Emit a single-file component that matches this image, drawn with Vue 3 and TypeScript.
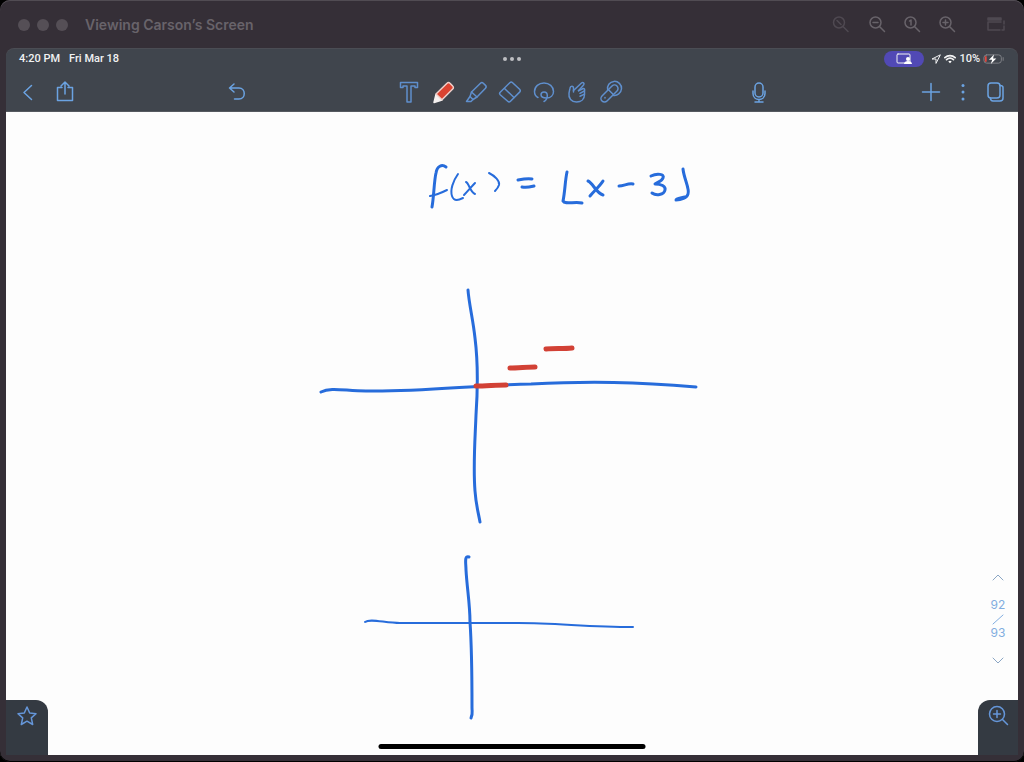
<script setup lang="ts">
import { ref } from 'vue'

type Tool = { id: string; label: string; paths: string[] }

const tools: Tool[] = [
  { id: 'text', label: 'Text', paths: ['M3.5 2.5h17v5h-2.500v-1.500H14v16h-4V6H6v1.500H3.500z'] },
  { id: 'pencil', label: 'Pencil', paths: [] },
  {
    id: 'highlighter',
    label: 'Highlighter',
    paths: ['M7.500 12L16.500 3.200a2 2 0 0 1 2.800 0l2.200 2.200a2 2 0 0 1 0 2.800L13 17z', 'M7.500 12l-1.500 4.500L9 19.500l4-2.500', 'M6 16.500L2.500 21.500H7l2-2'],
  },
  {
    id: 'eraser',
    label: 'Eraser',
    paths: ['M2.200 12.300L11.800 2.700a2 2 0 0 1 2.800 0l7 6.600a2 2 0 0 1 0 2.800L12.500 21.300a2 2 0 0 1-2.800 0l-7.500-6.600a1.700 1.700 0 0 1 0-2.400z', 'M6.500 8.500l9.500 9'],
  },
  {
    id: 'lasso',
    label: 'Lasso',
    paths: ['M6 17.500C3.500 16.200 2.500 14 2.500 11.500c0-5 4.300-8.500 9.500-8.500s9.500 3.500 9.500 8.500c0 4-3 6.500-7 6.500-3 0-5.500-1-5.500-3.200 0-1.800 1.300-2.800 3-2.800 2 0 3.300 1.200 3.300 3.500 0 3-1.300 5-3.300 6'],
  },
  {
    id: 'hand',
    label: 'Gesture',
    paths: [
      'M8.500 12V8.200c0-2.700-3.200-2.700-3.500 0l-1 5c-.8 5 2.500 8.800 7.500 8.800 4.700 0 8-2.800 8-7.500V11',
      'M8.500 10.500L16.500 3c1.500-1.300 3.300.400 2.100 2L13.500 10.800',
      'M13.500 10.800l4.200-2c1.800-.8 2.800 1.400 1.200 2.300L15 13.300M15 16.200l4-1.800',
    ],
  },
  {
    id: 'pointer',
    label: 'Laser pointer',
    paths: ['M13 6L3 16a3.500 3.500 0 0 0 5 5L18 11a3.500 3.500 0 0 0-5-5z', 'M8.700 10A7 7 0 1 1 14 15.200', 'M9.500 9.700l4.800 4.800M6 17.500v.500'],
  },
]

const activeTool = ref('pencil')
const page = ref(92)
const pageCount = 93

const inkStrokes = [
  // f(x) = ⌊x − 3⌋
  { width: 3, d: 'M446 167c-4-3-9-1-10 6-2 8-2 23-4 34' },
  { width: 2, d: 'M430 196c7-1 11-3 17-6' },
  { width: 2, d: 'M458 174c-5 7-8 16-6 22 2 6 7 4 11 2' },
  { width: 2, d: 'M466 182c3 1 4 10 9 12M475 183c-3 3-7 8-11 12' },
  { width: 2, d: 'M489 173c6 3 11 8 10 12-1 3-2 4-4 6' },
  { width: 3, d: 'M518 180c5-1 10-2 14-1' },
  { width: 3, d: 'M522 187c5 1 8 0 12-1' },
  { width: 3, d: 'M567 172c-2 9-2 20-4 29 2 4 12 0 19 2' },
  { width: 3, d: 'M588 181c5 2 8 12 15 14M603 181c-3 5-9 10-13 15' },
  { width: 3, d: 'M619 186c5 0 9-3 14-2' },
  { width: 3, d: 'M651 176c6-3 14-2 12 2-1 3-5 4-8 6 6 0 11 2 10 6-1 5-9 6-13 3' },
  { width: 3, d: 'M683 169c1 10 7 20 5 25-1 4-7 6-12 6 0-2 5-2 9-3' },
  // first pair of axes
  { width: 3, d: 'M468 290c1 14 5 29 7 48 3 24 3 48 1 77-1 26-3 51-1 76 1 14 3 20 5 31' },
  { width: 3, d: 'M321 392c10-5 24-1 45-1 55 1 109-6 165-7 60-3 105-2 165 3' },
  // second pair of axes
  { width: 3, d: 'M469 557c-5-2-3 7-3 13 1 18 4 34 4 52 2 29 2 61 2 86 0 4 1 6-1 10' },
  { width: 2, d: 'M365 622c5-4 20 1 35 1h118c39 0 70 4 115 4' },
]

const steps = ['M476 386c10 0 20-1 30-1', 'M510 368c8 0 17-1 25-1', 'M546 349c8-1 17 0 26-1']
</script>

<template>
  <div class="window">
    <header class="titlebar">
      <div class="lights"><i></i><i></i><i></i></div>
      <h1>Viewing Carson’s Screen</h1>
      <div class="zooms">
        <button type="button" class="dim" aria-label="Zoom to fit">
          <svg viewBox="0 0 24 24"><circle cx="9" cy="9.500" r="5.500" /><path d="M13 13.500l5 5M7 7.500l4 4" /></svg>
        </button>
        <button type="button" aria-label="Zoom out">
          <svg viewBox="0 0 24 24"><circle cx="10.500" cy="9.500" r="5.500" /><path d="M14.500 13.500l5 5M8 9.500h5" /></svg>
        </button>
        <button type="button" aria-label="Actual size">
          <svg viewBox="0 0 24 24"><circle cx="10.500" cy="9.500" r="5.500" /><path d="M14.500 13.500l5 5M9.500 8l1.500-1v5" /></svg>
        </button>
        <button type="button" aria-label="Zoom in">
          <svg viewBox="0 0 24 24"><circle cx="10.500" cy="9.500" r="5.500" /><path d="M14.500 13.500l5 5M8 9.500h5M10.500 7v5" /></svg>
        </button>
        <button type="button" class="dim panel" aria-label="Show panel">
          <svg viewBox="0 0 24 24"><path d="M4 7V5h13v2z" fill="currentColor" /><path d="M4 9h13M4 9v8h12M20 8v3M20 13v4h-2" /></svg>
        </button>
      </div>
    </header>

    <main class="tablet">
      <div class="status">
        <div class="clock"><span>4:20 PM</span><span>Fri Mar 18</span></div>
        <div class="dots"><i></i><i></i><i></i></div>
        <div class="system">
          <span class="share-pill">
            <svg viewBox="0 0 16 12"><rect x="1" y="1" width="13" height="9" rx="1" /><circle cx="12" cy="6" r="2" class="solid" /><path d="M8 11c0-4 8-4 8 0z" class="solid" /></svg>
          </span>
          <svg class="locate" viewBox="0 0 10 10"><path d="M9 1L1 5h4v4z" /></svg>
          <svg class="wifi" viewBox="0 0 14 10"><path d="M1 3.500c3.500-3.300 8.500-3.300 12 0M3 5.800c2.500-2.200 5.500-2.200 8 0" /><path d="M5 8c1.500-1.200 2.500-1.200 4 0L7 10z" class="solid" /></svg>
          <span>10%</span>
          <svg class="battery" viewBox="0 0 24 12"><rect x="1" y="1.500" width="19" height="9" rx="3" class="case" /><path d="M22 4.500v3" class="case" /><rect x="2" y="3" width="2" height="6" class="charge" /><path d="M12 1L6.500 6.800h3.500L8.500 11.500l6-6H11z" class="solid" /></svg>
        </div>
      </div>

      <nav class="toolbar" aria-label="Tools">
        <div class="left">
          <button type="button" aria-label="Back"><svg viewBox="0 0 24 24"><path d="M15.500 5.500L8 12.500l7.500 7" /></svg></button>
          <button type="button" aria-label="Share"><svg viewBox="0 0 24 24"><path d="M9 7.500H4.500v13h15v-13H15M12 14V2M8 6l4-4 4 4" /></svg></button>
          <button type="button" class="undo" aria-label="Undo"><svg viewBox="0 0 24 24"><path d="M9 4L4.500 8 9 12M4.500 8H14c7 0 7 11 0 11H9.500" /></svg></button>
        </div>
        <div class="tools">
          <button v-for="t in tools" :key="t.id" type="button" :aria-label="t.label" :aria-pressed="activeTool === t.id" @click="activeTool = t.id">
            <svg v-if="t.id === 'pencil'" viewBox="0 0 24 24">
              <path class="tip" d="M5 14.500L3 22.500l8-2.500z" />
              <path class="barrel" d="M5 14L16 3.200a2 2 0 0 1 3 0L21.700 6a2 2 0 0 1 0 3L11 19.800z" />
            </svg>
            <svg v-else viewBox="0 0 24 24"><path v-for="d in t.paths" :key="d" :d="d" /></svg>
          </button>
        </div>
        <div class="right">
          <button type="button" aria-label="Record"><svg viewBox="0 0 24 24"><rect x="8" y="3" width="8" height="14" rx="4" /><path d="M6 11v2.500c0 8 12 8 12 0V11M12 19.500V22M8 22h8" /></svg></button>
          <button type="button" class="add" aria-label="Add"><svg viewBox="0 0 24 24"><path d="M12 3.500v17M3.500 12h17" /></svg></button>
          <button type="button" aria-label="More"><svg viewBox="0 0 24 24" class="more"><circle cx="12" cy="5.500" r="1.500" /><circle cx="12" cy="12" r="1.500" /><circle cx="12" cy="19" r="1.500" /></svg></button>
          <button type="button" aria-label="Pages"><svg viewBox="0 0 24 24"><rect x="5" y="3" width="12" height="15" rx="3" /><path d="M17 5.500c2 0 3 .500 3 2V18c0 2-1 3-3 3h-7c-1.500 0-2.500-1-2.500-3" /></svg></button>
        </div>
      </nav>

      <section class="paper">
        <svg class="ink" viewBox="6 112 1012 643" role="img" aria-label="f(x) = ⌊x − 3⌋ with two pairs of axes">
          <path v-for="s in inkStrokes" :key="s.d" :d="s.d" :stroke-width="s.width" />
          <path v-for="d in steps" :key="d" :d="d" class="step" />
        </svg>

        <div class="pager">
          <button type="button" aria-label="Previous page" @click="page = Math.max(1, page - 1)"><svg viewBox="0 0 12 8"><path d="M1 7l5-5 5 5" /></svg></button>
          <span>{{ page }}</span>
          <svg class="slash" viewBox="0 0 12 12"><path d="M1 11L11 2" /></svg>
          <span>{{ pageCount }}</span>
          <button type="button" aria-label="Next page" @click="page = Math.min(pageCount, page + 1)"><svg viewBox="0 0 12 8"><path d="M1 1l5 5 5-5" /></svg></button>
        </div>

        <button type="button" class="corner star" aria-label="Favorites"><svg viewBox="0 0 24 24"><path d="M12 3l2.700 6 6.300.700-4.700 4.200L17.700 20.500 12 17.200 6.300 20.500l1.400-6.600L3 9.700 9.300 9z" /></svg></button>
        <button type="button" class="corner lens" aria-label="Zoom canvas"><svg viewBox="0 0 24 24"><circle cx="11" cy="10" r="7.500" /><path d="M16.500 15.500l5 5M7.500 10h7M11 6.500v7" /></svg></button>
        <div class="home-bar"></div>
      </section>
    </main>
  </div>
</template>

<style>
body {
  margin: 0;
  background: #000;
}
</style>

<style scoped>
.window {
  box-sizing: border-box;
  height: 100vh;
  display: flex;
  flex-direction: column;
  padding: 0 6px 7px;
  background: #352f37;
  border-radius: 10px;
  box-shadow: inset 0 1px #514c53, inset 0 -1px #000;
  font-family: Inter, "Liberation Sans", sans-serif;
}
button {
  width: 24px;
  height: 24px;
  padding: 0;
  border: 0;
  background: none;
  color: inherit;
  font: inherit;
  cursor: pointer;
}
svg {
  display: block;
  width: 100%;
  height: 100%;
  fill: none;
  stroke: currentColor;
  stroke-linecap: round;
  stroke-linejoin: round;
}
.solid {
  fill: #fff;
  stroke: none;
}
.titlebar {
  flex: none;
  display: flex;
  align-items: center;
  height: 49px;
  padding: 0 10px 0 12px;
  color: #68636a;
}
.lights {
  display: flex;
  gap: 7px;
}
.lights i {
  width: 12px;
  height: 12px;
  border-radius: 50%;
  background: #554f56;
}
h1 {
  margin: 0 0 0 17px;
  font-size: 14px;
  line-height: 20px;
  font-weight: 600;
}
.zooms {
  display: flex;
  gap: 11px;
  margin-left: auto;
}
.zooms svg {
  stroke-width: 1.5;
}
.dim {
  color: #4f4951;
}
.panel {
  margin-left: 14px;
}
.tablet {
  flex: 1;
  min-height: 0;
  display: flex;
  flex-direction: column;
  overflow: hidden;
  border-radius: 8px 8px 0 0;
  background: #40454d;
  box-shadow: 0 -1px #4b4d54;
}
.status {
  flex: none;
  display: grid;
  grid-template-columns: 1fr auto 1fr;
  align-items: center;
  height: 20px;
  padding: 0 13px;
  color: #f1f2f3;
  font-family: Roboto, Inter, sans-serif;
  font-size: 11px;
  line-height: 16px;
  font-weight: 500;
}
.clock {
  display: flex;
  gap: 9px;
}
.dots {
  display: flex;
  gap: 3px;
}
.dots i {
  width: 4px;
  height: 4px;
  border-radius: 50%;
  background: #bdbfc2;
}
.system {
  display: flex;
  justify-content: flex-end;
  align-items: center;
  gap: 3px;
}
.share-pill {
  display: grid;
  place-items: center;
  width: 40px;
  height: 16px;
  margin-right: 4px;
  border-radius: 8px;
  background: #5149b5;
}
.share-pill svg {
  width: 16px;
  height: 12px;
}
.locate {
  width: 10px;
  height: 10px;
}
.wifi {
  width: 12px;
  height: 10px;
  stroke-width: 2;
}
.battery {
  width: 22px;
  height: 12px;
}
.case {
  stroke: #83868b;
}
.charge {
  fill: #e5483f;
  stroke: none;
}
.toolbar {
  flex: none;
  box-sizing: border-box;
  display: grid;
  grid-template-columns: 1fr auto 1fr;
  align-items: center;
  height: 43px;
  padding-top: 3px;
  border-bottom: 1px solid #565a60;
  color: #6ba3e2;
}
.toolbar svg {
  stroke-width: 1.5;
}
.left,
.right,
.tools {
  display: flex;
  align-items: center;
}
.left {
  gap: 13px;
  padding: 0 148px 0 10px;
}
.undo {
  margin-left: auto;
}
.tools {
  justify-content: space-between;
  width: 226px;
  margin-right: 4px;
  color: #5f8fcd;
}
.right {
  gap: 8px;
  padding: 0 11px 0 120px;
}
.add {
  margin-left: auto;
}
.toolbar .more {
  fill: currentColor;
  stroke: none;
}
.tip {
  fill: #f5f1f0;
  stroke: #f5f1f0;
}
.barrel {
  fill: #db4331;
  stroke: #efcfca;
}
.paper {
  position: relative;
  flex: 1;
  min-height: 0;
  background: #fdfdfd;
}
.ink {
  color: #276cdb;
}
.step {
  stroke: #d24135;
  stroke-width: 5;
}
.pager {
  position: absolute;
  right: 10px;
  bottom: 86px;
  display: flex;
  flex-direction: column;
  align-items: center;
  width: 20px;
  color: #82ade0;
  font-size: 12px;
  line-height: 16px;
}
.pager button {
  width: 12px;
  height: 16px;
}
.pager button svg {
  height: 8px;
  margin: 4px 0;
  color: #8ba6c4;
}
.pager button:first-child {
  margin-bottom: 12px;
}
.pager button:last-child {
  margin-top: 12px;
}
.slash {
  width: 12px;
  height: 12px;
}
.corner {
  position: absolute;
  bottom: 0;
  display: flex;
  justify-content: center;
  height: 55px;
  padding-top: 4px;
  background: #343a42;
  color: #6596d9;
}
.corner svg {
  width: 24px;
  height: 24px;
  stroke-width: 1.5;
}
.star {
  left: 0;
  width: 42px;
  border-radius: 0 12px 0 0;
}
.lens {
  right: 0;
  width: 40px;
  border-radius: 12px 0 0 0;
}
.home-bar {
  position: absolute;
  left: 50%;
  bottom: 6px;
  width: 267px;
  height: 5px;
  border-radius: 3px;
  background: #000;
  transform: translateX(-50%);
}
</style>
